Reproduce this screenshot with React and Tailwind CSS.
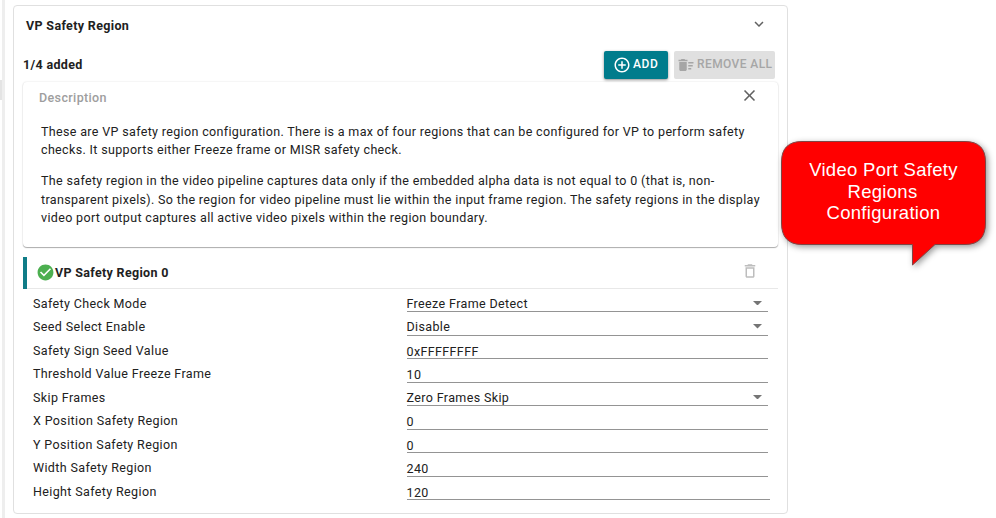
import React from "react";

const fields = [
  { label: "Safety Check Mode", value: "Freeze Frame Detect", select: true },
  { label: "Seed Select Enable", value: "Disable", select: true },
  { label: "Safety Sign Seed Value", value: "0xFFFFFFFF" },
  { label: "Threshold Value Freeze Frame", value: "10" },
  { label: "Skip Frames", value: "Zero Frames Skip", select: true },
  { label: "X Position Safety Region", value: "0" },
  { label: "Y Position Safety Region", value: "0" },
  { label: "Width Safety Region", value: "240" },
  { label: "Height Safety Region", value: "120", wide: true },
];

function Icon({ d, className }) {
  return (
    <svg viewBox="0 0 24 24" fill="currentColor" className={"block shrink-0 " + className}>
      <path d={d} />
    </svg>
  );
}

const PLUS_CIRCLE =
  "M13 7h-2v4H7v2h4v4h2v-4h4v-2h-4V7zm-1-5C6.48 2 2 6.48 2 12s4.48 10 10 10 10-4.48 10-10S17.520 2 12 2zm0 18c-4.410 0-8-3.590-8-8s3.590-8 8-8 8 3.590 8 8-3.590 8-8 8z";
const DELETE_SWEEP =
  "M15 16h4v2h-4zm0-8h7v2h-7zm0 4h6v2h-6zM3 18c0 1.100.9 2 2 2h6c1.100 0 2-.9 2-2V8H3v10zM14 5h-3l-1-1H6L5 5H2v2h12z";
const CLOSE =
  "M19 6.410L17.590 5 12 10.590 6.410 5 5 6.410 10.590 12 5 17.590 6.410 19 12 13.410 17.590 19 19 17.590 13.410 12z";
const CHEVRON = "M7.410 8.590L12 13.170l4.590-4.580L18 10l-6 6-6-6 1.410-1.410z";
const CHECK_CIRCLE =
  "M12 2C6.480 2 2 6.480 2 12s4.480 10 10 10 10-4.480 10-10S17.520 2 12 2zm-2 15l-5-5 1.410-1.410L10 14.170l7.590-7.590L19 8l-9 9z";
const TRASH =
  "M6 19c0 1.100.9 2 2 2h8c1.100 0 2-.9 2-2V7H6v12zM8 9h8v10H8V9zm7.500-5l-1-1h-5l-1 1H5v2h14V4h-3.500z";

function Field({ label, value, select, wide }) {
  return (
    <div className="flex h-[23.55px] pl-[10px]">
      <div className="w-[373.500px] shrink-0 pt-[5px] leading-[18px]">{label}</div>
      <div
        className={
          "flex h-[22.500px] justify-between border-b border-[#949494] " +
          (wide ? "w-[363.500px]" : "w-[361.500px]")
        }
      >
        <span className={select ? "pt-[5px] leading-[18px]" : "pt-[6px] leading-[18px]"}>{value}</span>
        {select && (
          <svg viewBox="0 0 9 4.500" className="mt-[11px] mr-[6.500px] h-[4.500px] w-[9px]" fill="#757575">
            <path d="M0 0h9L4.500 4.500z" />
          </svg>
        )}
      </div>
    </div>
  );
}

export default function App() {
  return (
    <div className="relative flex h-[518px] w-[996px] overflow-hidden bg-white font-['Roboto',sans-serif] text-[12.5px] tracking-[0.37px] text-[#212121]">
      <div className="w-[2px] pt-[80px]">
        <div className="h-[20px] bg-[#e4e4e4]" />
      </div>
      <div className="w-[3px] bg-[#eeeeee]" />

      <section className="mt-[5px] ml-[8px] h-[509px] w-[775px] rounded-[4px] border border-[#e0e0e0] px-[9px]">
        <header className="flex h-[38px] items-center justify-between pr-[10px] pl-[3px]">
          <h2 className="pt-[2px] font-bold tracking-[0.34px]">VP Safety Region</h2>
          <Icon d={CHEVRON} className="mb-[3px] h-[18px] w-[18px] text-[#616161]" />
        </header>

        <div className="flex h-[37px] items-start justify-between">
          <span className="pt-[11px] font-bold leading-[20px] tracking-[0.34px]">1/4 added</span>
          <div className="mt-[7px] mr-[3px] flex gap-[6px] text-[12px] font-medium">
            <button className="flex h-[28px] w-[64px] items-center rounded-[2px] bg-[#007c8c] pl-[9px] text-white shadow-[0_1px_3px_rgba(0,0,0,0.45)]">
              <Icon d={PLUS_CIRCLE} className="h-[18px] w-[18px]" />
              <span className="ml-[2px] pb-[2px] tracking-[0.6px]">ADD</span>
            </button>
            <button className="flex h-[28px] w-[101px] items-center rounded-[2px] bg-[#e0e0e0] pl-[3px] text-[#a6a6a6]">
              <Icon d={DELETE_SWEEP} className="h-[18px] w-[18px]" />
              <span className="ml-[2px] whitespace-nowrap pb-[2px] tracking-[0.4px]">REMOVE ALL</span>
            </button>
          </div>
        </div>

        <article className="mt-[1px] h-[165px] w-[755px] rounded-[4px] bg-white pr-[19px] pl-[18px] shadow-[0_1px_1px_rgba(0,0,0,0.3),0_0_2px_rgba(0,0,0,0.14)]">
          <div className="-ml-[2px] flex h-[33px] items-center justify-between">
            <h3 className="pb-[1px] font-medium text-[#9e9e9e]">Description</h3>
            <Icon d={CLOSE} className="mb-[6px] h-[19px] w-[19px] text-[#616161]" />
          </div>
          <p className="mt-[8px] whitespace-nowrap leading-[18.200px] tracking-[0.343px]">
            These are VP safety region configuration. There is a max of four regions that can be configured for VP to perform safety
            <br />
            checks. It supports either Freeze frame or MISR safety check.
          </p>
          <p className="mt-[13px] whitespace-nowrap leading-[18.200px] tracking-[0.343px]">
            The safety region in the video pipeline captures data only if the embedded alpha data is not equal to 0 (that is, non-
            <br />
            transparent pixels). So the region for video pipeline must lie within the input frame region. The safety regions in the display
            <br />
            video port output captures all active video pixels within the region boundary.
          </p>
        </article>

        <div className="mt-[10px] flex h-[32px] w-[755px] items-center border-b border-[#e8e8e8]">
          <div className="h-[32px] w-[4px] bg-[#107c87]" />
          <Icon d={CHECK_CIRCLE} className="ml-[9px] h-[19px] w-[19px] text-[#4caf50]" />
          <h3 className="pt-[1px] font-bold tracking-[0.32px]">VP Safety Region 0</h3>
          <Icon d={TRASH} className="mr-[19.5px] mb-[3px] ml-auto h-[18px] w-[18px] text-[#bdbdbd]" />
        </div>

        <div className="pt-[0.6px]">
          {fields.map((f) => (
            <Field key={f.label} {...f} />
          ))}
        </div>
      </section>

      <aside className="absolute top-[141px] left-[781px] h-[126px] w-[205px]">
        <svg
          viewBox="0 0 205 126"
          className="absolute inset-0 h-full w-full overflow-visible drop-shadow-[2px_2px_3px_rgba(0,0,0,0.4)]"
        >
          <path
            d="M21 .5H184Q204.500 .5 204.500 21V82Q204.500 103.500 184 103.500H154L131.500 124V103.500H21Q.5 103.500 .5 82V21Q.5 .5 21 .5Z"
            fill="#ff0000"
            stroke="#7f4545"
            strokeWidth="1"
          />
        </svg>
        <p className="relative pt-[18px] text-center font-['Liberation_Sans',sans-serif] text-[18.5px] leading-[21.500px] tracking-[0.3px] text-white">
          Video Port Safety
          <br />
          <span className="relative -left-[1px]">Regions</span>
          <br />
          Configuration
        </p>
      </aside>
    </div>
  );
}
